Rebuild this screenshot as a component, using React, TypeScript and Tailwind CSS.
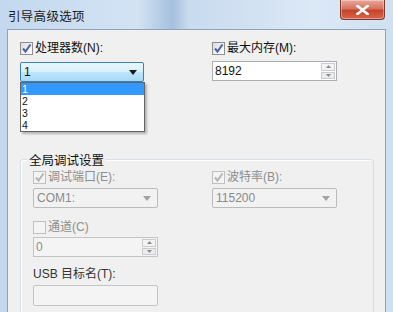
import React from "react";

const F = { fontFamily: '"Liberation Sans","Noto Sans CJK SC",sans-serif' };

function Check({ checked, disabled }: { checked: boolean; disabled?: boolean }) {
  return (
    <div
      className={`w-[13px] h-[13px] border flex items-center justify-center shrink-0 ${
        disabled ? "border-[#c0c0c0] bg-[#f4f4f4]" : "border-[#8e8f8f] bg-[linear-gradient(135deg,#dcdcdc,#ffffff)]"
      }`}
    >
      {checked && (
        <svg width="11" height="11" viewBox="0 0 11 11">
          <path
            d="M2 5.5 L4.5 8.5 L9.5 1.5"
            fill="none"
            stroke={disabled ? "#b4b4b4" : "#4c61a0"}
            strokeWidth="2"
          />
        </svg>
      )}
    </div>
  );
}

function Arrow({ color }: { color: string }) {
  return (
    <svg width="8" height="5" viewBox="0 0 8 5">
      <path d="M0 0 L8 0 L4 5 Z" fill={color} />
    </svg>
  );
}

function Spin({ value, disabled, w }: { value: string; disabled?: boolean; w: string }) {
  return (
    <div
      className={`${w} h-[20px] border flex items-stretch ${
        disabled ? "border-[#c4c4c4] bg-[#f4f4f4] text-[#8d8d8d]" : "border-[#abadb3] bg-white text-[#111]"
      }`}
    >
      <div className="flex-1 flex items-center pl-[2px] text-[12px]" style={F}>
        {value}
      </div>
      <div className="w-[16px] flex flex-col gap-[1px] p-[1px]">
        <div className="flex-1 border border-[#c9cdd2] bg-[#f3f3f3] flex items-center justify-center">
          <svg width="5" height="3" viewBox="0 0 5 3">
            <path d="M0 3 L5 3 L2.5 0 Z" fill="#8a8a8a" />
          </svg>
        </div>
        <div className="flex-1 border border-[#c9cdd2] bg-[#ececec] flex items-center justify-center">
          <svg width="5" height="3" viewBox="0 0 5 3">
            <path d="M0 0 L5 0 L2.5 3 Z" fill="#8a8a8a" />
          </svg>
        </div>
      </div>
    </div>
  );
}

function DisCombo({ value }: { value: string }) {
  return (
    <div className="w-[125px] h-[20px] border border-[#b9bcbf] rounded-[2px] bg-[#f2f2f2] flex items-center justify-between pl-[3px] pr-[6px] text-[12px] text-[#8a8a8a]" style={F}>
      <span>{value}</span>
      <Arrow color="#a3a3a3" />
    </div>
  );
}

export default function App() {
  return (
    <div
      className="w-[393px] h-[312px] overflow-hidden flex flex-col bg-[linear-gradient(90deg,#c3d8ee_0%,#d3e3f4_35%,#a5c0dd_44%,#c9dbef_48%,#dbe8f6_80%,#cfe0f2_100%)]"
      style={F}
    >
      {/* Title bar */}
      <div className="h-[29px] flex items-start justify-between pl-[8px] pr-[8px] shrink-0">
        <div className="mt-[7px] text-[12.5px] text-[#1a1a1a] tracking-[0.3px]" style={{ fontFamily: '"Noto Sans CJK SC",sans-serif' }}>
          引导高级选项
        </div>
        <div className="w-[45px] h-[20px] rounded-b-[4px] border border-t-0 border-[#7b3a30] bg-[linear-gradient(180deg,#e9a99c_0%,#d7735f_45%,#c5432a_55%,#d8664b_100%)] flex items-center justify-center shadow-[inset_0_0_0_1px_rgba(255,255,255,0.35)]">
          <svg width="13" height="10" viewBox="0 0 13 10">
            <path d="M1.5 1 L11.5 9 M11.5 1 L1.5 9" stroke="#ffffff" strokeWidth="2.6" strokeLinecap="square" />
          </svg>
        </div>
      </div>
      {/* Body */}
      <div className="flex-1 px-[7px] flex">
        <div className="flex-1 border border-b-0 border-[#8ea3bb] bg-[#f0f0f0] pt-[12px] pl-[12px] text-[12px] text-[#111]">
          {/* Top rows */}
          <div className="flex">
            <div className="w-[192px] flex flex-col">
              <div className="h-[13px] flex items-center gap-[2px]">
                <Check checked />
                <span className="leading-[13px]">处理器数(N):</span>
              </div>
              <div className="relative mt-[7px] w-[124px] h-[20px] border border-[#3c7fb1] rounded-[2px] bg-[linear-gradient(180deg,#eaf6fd_0%,#d9f0fc_48%,#bee6fd_52%,#a7d9f5_100%)] flex items-center justify-between pl-[3px] pr-[6px]">
                <span>1</span>
                <Arrow color="#1a1a1a" />
                <div className="absolute top-[19px] left-[-1px] w-[125px] bg-white border border-[#646464] shadow-[2px_2px_2px_rgba(0,0,0,0.25)] flex flex-col text-[10.5px]">
                  <div className="h-[12px] bg-[#3399ff] text-white flex items-center pl-[1px] leading-[11px] overflow-hidden">1</div>
                  <div className="h-[12px] flex items-center pl-[1px] leading-[11px] overflow-hidden">2</div>
                  <div className="h-[12px] flex items-center pl-[1px] leading-[11px] overflow-hidden">3</div>
                  <div className="h-[12px] flex items-center pl-[1px] leading-[11px] overflow-hidden">4</div>
                </div>
              </div>
            </div>
            <div className="flex flex-col">
              <div className="h-[13px] flex items-center gap-[2px]">
                <Check checked />
                <span className="leading-[13px]">最大内存(M):</span>
              </div>
              <div className="mt-[6px]">
                <Spin value="8192" w="w-[125px]" />
              </div>
            </div>
          </div>
          {/* Group box */}
          <div className="relative mt-[77px] w-[354px] h-[200px] border border-[#d5dfe5] rounded-[3px] shadow-[inset_1px_1px_0_#ffffff] pt-[11px] pl-[12px]">
            <div className="absolute top-[-8px] left-[6px] px-[2px] bg-[#f0f0f0] text-[12.5px] leading-[15px] text-[#111]" style={{ fontFamily: '"Noto Sans CJK SC",sans-serif' }}>
              全局调试设置
            </div>
            <div className="flex">
              <div className="w-[179px] flex flex-col">
                <div className="h-[13px] flex items-center gap-[2px] text-[#8d8d8d]">
                  <Check checked disabled />
                  <span className="leading-[13px]">调试端口(E):</span>
                </div>
                <div className="mt-[4px]">
                  <DisCombo value="COM1:" />
                </div>
                <div className="mt-[13px] h-[13px] flex items-center gap-[2px] text-[#8d8d8d]">
                  <Check checked={false} disabled />
                  <span className="leading-[13px]">通道(C)</span>
                </div>
                <div className="mt-[3px]">
                  <Spin value="0" disabled w="w-[125px]" />
                </div>
                <div className="mt-[11px] h-[13px] flex items-center text-[#333] leading-[13px]">USB 目标名(T):</div>
                <div className="mt-[4px] w-[125px] h-[21px] border border-[#c4c4c4] rounded-[2px] bg-[#f4f4f4]" />
              </div>
              <div className="flex flex-col">
                <div className="h-[13px] flex items-center gap-[2px] text-[#8d8d8d]">
                  <Check checked disabled />
                  <span className="leading-[13px]">波特率(B):</span>
                </div>
                <div className="mt-[4px]">
                  <DisCombo value="115200" />
                </div>
              </div>
            </div>
          </div>
        </div>
      </div>
    </div>
  );
}
